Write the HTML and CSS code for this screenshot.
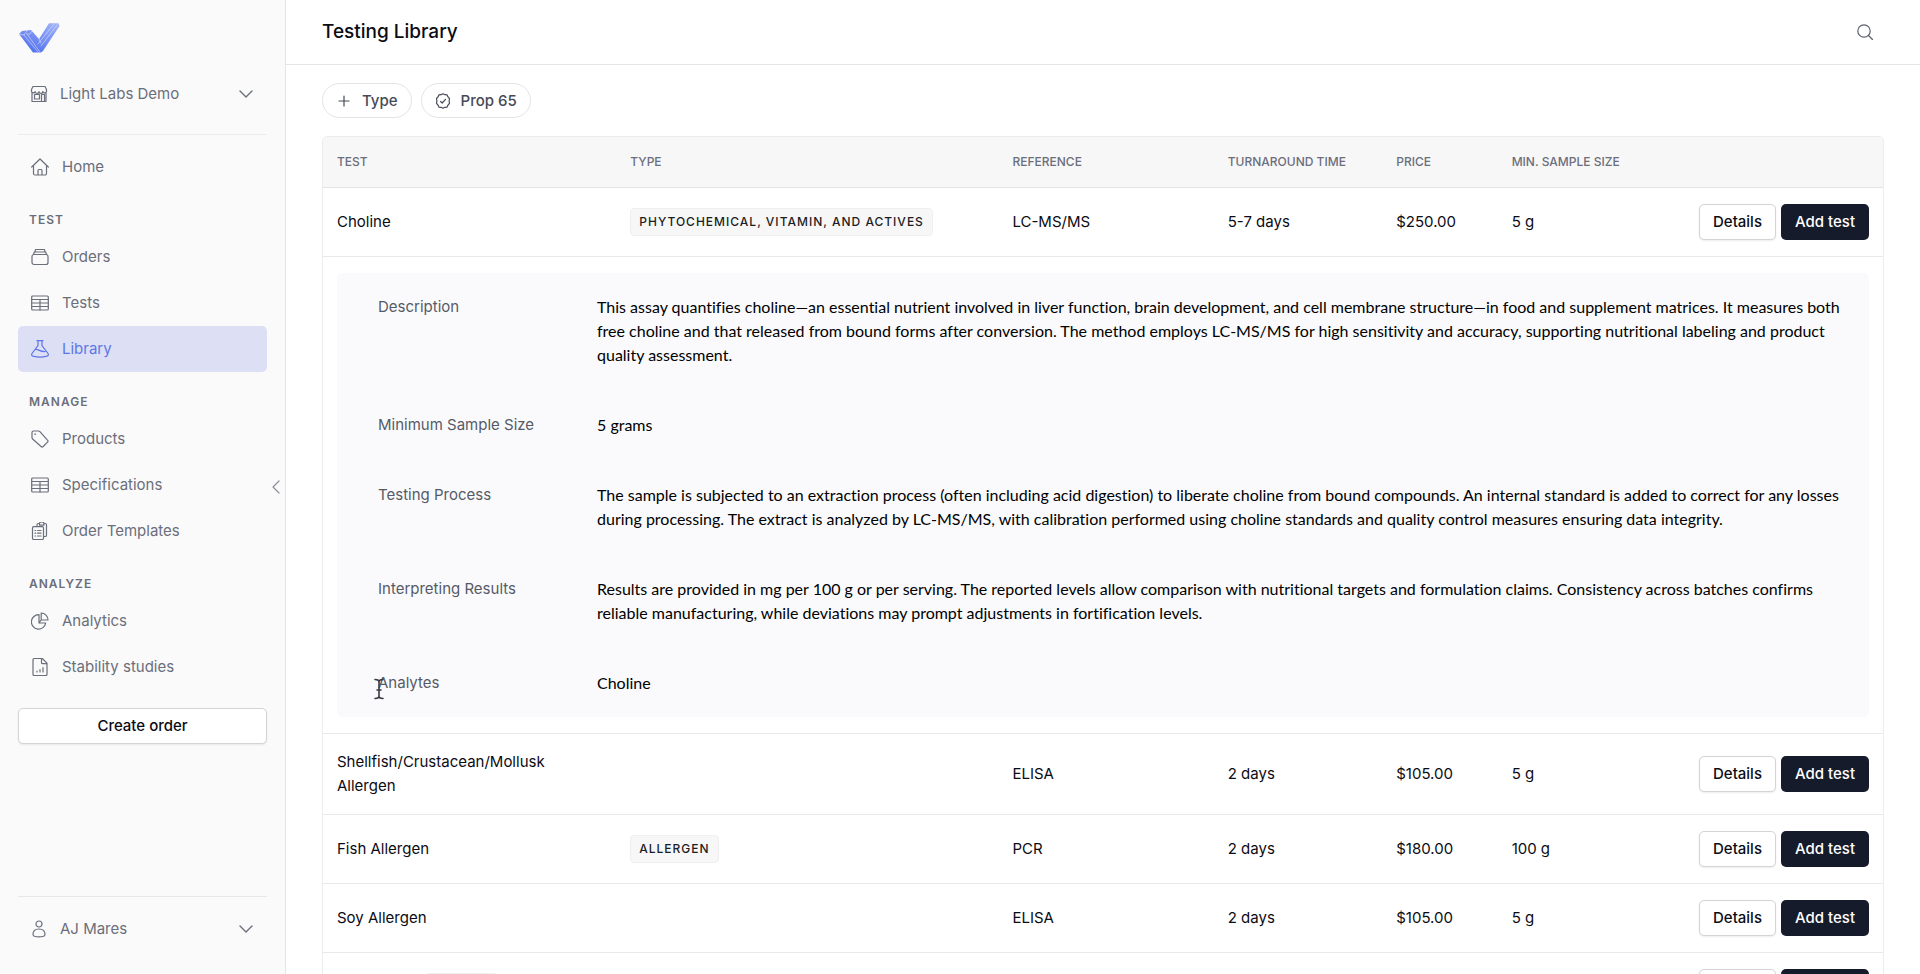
FILE: index.html
```
<!DOCTYPE html>
<html lang="en">
	<head>
		<meta charset="utf-8">
		<title>Testing Library</title>
		<link rel="stylesheet" href="styles.css">
	</head>
	<body>
		<aside class="sidebar">
			<a class="logo" href="#" aria-label="Light Labs">
				<svg width="42" height="32" viewBox="0 0 42 32">
					<defs>
						<linearGradient id="logoFill" x1="1" y1="0" x2="0.4" y2="1">
							<stop offset="0" stop-color="#a3b6f7"/>
							<stop offset="1" stop-color="#5673ee"/>
						</linearGradient>
					</defs>
					<path d="M1 12 4 9l9-1 8 9L31 1.300h9.500L41.500 4 25 29l-2 1.500h-8z" fill="url(#logoFill)"/>
					<path d="M1 12l5 1 3-4M6 13l14 17M9 12l13 18M9 12h3l2-3M36 2 20 22M39 3 23 24M21 17l2 4" fill="none" stroke="#dfe6fd" stroke-width="0.6"/>
				</svg>
			</a>
			<button class="switcher">
				<svg class="icon" viewBox="0 0 18 18"><path d="M3 1.500h12l1.500 3v2a1.900 1.900 0 0 1-3.700 0 1.900 1.900 0 0 1-3.800 0 1.900 1.900 0 0 1-3.800 0 1.900 1.900 0 0 1-3.700 0v-2zM2 8v8.500h14V8M4.500 9.500h5V14h-5zM11.500 16.500v-7h3v7"/></svg>
				<span>Light Labs Demo</span>
				<svg class="chevron" viewBox="0 0 14 8"><path d="M1 1l6 6 6-6"/></svg>
			</button>
			<nav class="nav">
				<a class="nav-item" href="#">
					<svg class="icon" viewBox="0 0 18 18"><path d="M.7 9 9 1l8.300 8M2.500 7.500v8a1.500 1.500 0 0 0 1.500 1.500h10a1.500 1.500 0 0 0 1.500-1.500v-8M7 17v-4.500a1 1 0 0 1 1-1h2a1 1 0 0 1 1 1V17"/></svg>
					Home
				</a>
				<h2 class="nav-title">Test</h2>
				<a class="nav-item" href="#">
					<svg class="icon" viewBox="0 0 18 18"><rect x="1" y="6.500" width="16" height="10" rx="2"/><path d="M2.500 6.500 3.300 4h11.400l.8 2.500M4 4l.6-2.500h8.800L14 4"/></svg>
					Orders
				</a>
				<a class="nav-item" href="#">
					<svg class="icon" viewBox="0 0 18 18"><rect x=".7" y="2" width="16.600" height="14" rx="1"/><path d="M.7 5.500h16.600M.7 9h16.600M.7 12.500h16.600M9 5.500V16"/></svg>
					Tests
				</a>
				<a class="nav-item active" href="#">
					<svg class="icon" viewBox="0 0 18 18"><path d="M6 .7h6M7 .7v5L1 13.500c-.8 1.300-.2 2.200 1 2.600 4 1.200 10 1.200 14 0 1.200-.4 1.800-1.300 1-2.600L11 5.700v-5M4.500 9.500c3-.5 5 2.500 9.500 2"/></svg>
					Library
				</a>
				<h2 class="nav-title">Manage</h2>
				<a class="nav-item" href="#">
					<svg class="icon" viewBox="0 0 18 18"><path d="M1 2.500A1.500 1.500 0 0 1 2.500 1h5a2 2 0 0 1 1.400.6l7.600 8.500a1.500 1.500 0 0 1 0 2.100l-4.300 4.300a1.500 1.500 0 0 1-2.100 0L1.600 9A2 2 0 0 1 1 7.500z"/><path d="M3.800 4.200h.8"/></svg>
					Products
				</a>
				<a class="nav-item" href="#">
					<svg class="icon" viewBox="0 0 18 18"><rect x=".7" y="2" width="16.600" height="14" rx="1"/><path d="M.7 5.500h16.600M.7 9h16.600M.7 12.500h16.600M9 5.500V16"/></svg>
					Specifications
				</a>
				<a class="nav-item" href="#">
					<svg class="icon" viewBox="0 0 18 18"><path d="M6 4.500V2.800a1.300 1.300 0 0 1 1.300-1.300h1.200a2.200 1.500 0 0 1 4.400 0h1.300a1.300 1.300 0 0 1 1.300 1.300v10.400a1.300 1.300 0 0 1-1.300 1.300H12.500M8.500 1.500v1.700h4.400V1.500"/><rect x="1.500" y="4.700" width="11" height="12.800" rx="1.300"/><path d="M4 8.500h.6M6.500 8.500h3.500M4 11.200h.6M6.500 11.200h3.500M4 14h.6M6.500 14h3.500"/></svg>
					Order Templates
				</a>
				<h2 class="nav-title">Analyze</h2>
				<a class="nav-item" href="#">
					<svg class="icon" viewBox="0 0 18 18"><path d="M8 2.700a7.200 7.200 0 1 0 6.700 8.300H8zM10.200 1v7H17a7 7 0 0 0-6.800-7zM8 11l2.200-3"/></svg>
					Analytics
				</a>
				<a class="nav-item" href="#">
					<svg class="icon" viewBox="0 0 18 18"><path d="M2 1.800A1.300 1.300 0 0 1 3.300.5h8L16 5.200v11a1.300 1.300 0 0 1-1.300 1.300H3.300A1.300 1.300 0 0 1 2 16.200zM10.500.7v4a1 1 0 0 0 1 1H16M6 14v-1M9 14v-2.500M12 14V9.500"/></svg>
					Stability studies
				</a>
			</nav>
			<button class="btn btn-light create">Create order</button>
			<div class="account">
				<button class="switcher">
					<svg class="icon" viewBox="0 0 18 18"><circle cx="9" cy="4" r="3"/><path d="M3 14.500c0-3.500 2-5.500 6-5.500s6 2 6 5.500c0 1.200-1 1.800-2.200 2-2.500.5-5.100.5-7.600 0-1.200-.2-2.200-.8-2.200-2z"/></svg>
					<span>AJ Mares</span>
					<svg class="chevron" viewBox="0 0 14 8"><path d="M1 1l6 6 6-6"/></svg>
				</button>
			</div>
			<button class="collapse" aria-label="Collapse sidebar">
				<svg width="8" height="14" viewBox="0 0 8 14"><path d="M7 1 1 7l6 6"/></svg>
			</button>
		</aside>
		<main class="main">
			<header class="topbar">
				<h1>Testing Library</h1>
				<button class="search" aria-label="Search">
					<svg width="16" height="16" viewBox="0 0 16 16"><circle cx="7" cy="7" r="6.200"/><path d="M11.500 11.500l4 4"/></svg>
				</button>
			</header>
			<div class="content">
				<div class="filters">
					<button class="chip">
						<svg class="icon-sm" viewBox="0 0 16 16"><path d="M8 3v10M3 8h10"/></svg>
						Type
					</button>
					<button class="chip">
						<svg class="icon-sm" viewBox="0 0 16 16"><path d="M8 .8l2 .9 2.100.2.900 2 1.500 1.600-.4 2.500.4 2.400-1.500 1.700-.9 2-2.100.2-2 .9-2-.9-2.100-.2-.9-2-1.500-1.700.4-2.400-.4-2.500L3 3.900l.9-2L6 1.700zM5.500 8.300l1.700 1.700 3.300-3.700"/></svg>
						Prop 65
					</button>
				</div>
				<div class="table-wrap">
					<table class="tests">
						<colgroup>
							<col class="col-test"><col class="col-type"><col class="col-ref"><col class="col-time"><col class="col-price"><col class="col-size"><col>
						</colgroup>
						<thead>
							<tr>
								<th>Test</th>
								<th>Type</th>
								<th>Reference</th>
								<th>Turnaround time</th>
								<th>Price</th>
								<th>Min. sample size</th>
								<th></th>
							</tr>
						</thead>
						<tbody>
							<tr>
								<td>Choline</td>
								<td><span class="badge">Phytochemical, vitamin, and actives</span></td>
								<td>LC-MS/MS</td>
								<td>5-7 days</td>
								<td>$250.00</td>
								<td>5 g</td>
								<td><div class="actions"><button class="btn btn-light">Details</button><button class="btn btn-dark">Add test</button></div></td>
							</tr>
							<tr>
								<td colspan="7">
									<dl class="details">
										<dt>Description</dt>
										<dd>This assay quantifies choline—an essential nutrient involved in liver function, brain development, and cell membrane structure—in food and supplement matrices. It measures both free choline and that released from bound forms after conversion. The method employs LC-MS/MS for high sensitivity and accuracy, supporting nutritional labeling and product quality assessment.</dd>
										<dt>Minimum Sample Size</dt>
										<dd>5 grams</dd>
										<dt>Testing Process</dt>
										<dd>The sample is subjected to an extraction process (often including acid digestion) to liberate choline from bound compounds. An internal standard is added to correct for any losses during processing. The extract is analyzed by LC-MS/MS, with calibration performed using choline standards and quality control measures ensuring data integrity.</dd>
										<dt>Interpreting Results</dt>
										<dd>Results are provided in mg per 100 g or per serving. The reported levels allow comparison with nutritional targets and formulation claims. Consistency across batches confirms reliable manufacturing, while deviations may prompt adjustments in fortification levels.</dd>
										<dt class="hovered">Analytes
											<svg class="cursor" width="10" height="22" viewBox="0 0 10 22"><path d="M1 1.500c2 0 4 .5 4 2.500 0-2 2-2.500 4-2.500M5 4v14M1 20.500c2 0 4-.5 4-2.500 0 2 2 2.500 4 2.500M3 12h4"/></svg>
										</dt>
										<dd>Choline</dd>
									</dl>
								</td>
							</tr>
							<tr>
								<td>Shellfish/Crustacean/Mollusk Allergen</td>
								<td></td>
								<td>ELISA</td>
								<td>2 days</td>
								<td>$105.00</td>
								<td>5 g</td>
								<td><div class="actions"><button class="btn btn-light">Details</button><button class="btn btn-dark">Add test</button></div></td>
							</tr>
							<tr>
								<td>Fish Allergen</td>
								<td><span class="badge">Allergen</span></td>
								<td>PCR</td>
								<td>2 days</td>
								<td>$180.00</td>
								<td>100 g</td>
								<td><div class="actions"><button class="btn btn-light">Details</button><button class="btn btn-dark">Add test</button></div></td>
							</tr>
							<tr>
								<td>Soy Allergen</td>
								<td></td>
								<td>ELISA</td>
								<td>2 days</td>
								<td>$105.00</td>
								<td>5 g</td>
								<td><div class="actions"><button class="btn btn-light">Details</button><button class="btn btn-dark">Add test</button></div></td>
							</tr>
							<tr>
								<td><span class="badge badge-inline"></span></td>
								<td></td>
								<td></td>
								<td></td>
								<td></td>
								<td></td>
								<td><div class="actions"><button class="btn btn-light">Details</button><button class="btn btn-dark">Add test</button></div></td>
							</tr>
						</tbody>
					</table>
				</div>
			</div>
		</main>
	</body>
</html>
```
FILE: styles.css
```
*
{
	box-sizing: border-box;
}
body
{
	margin: 0;
	display: flex;
	height: 100vh;
	overflow: hidden;
	background-color: #fff;
	font-family: Inter, "Liberation Sans", sans-serif;
	font-size: 15px;
	line-height: 24px;
	color: #0b0c14;
}
button
{
	font: inherit;
	color: inherit;
	background: none;
	border: none;
	padding: 0;
	cursor: pointer;
}
svg
{
	flex: none;
	fill: none;
	stroke: currentColor;
	stroke-width: 1.2;
	stroke-linecap: round;
	stroke-linejoin: round;
}
.sidebar
{
	position: relative;
	flex: none;
	display: flex;
	flex-direction: column;
	width: 286px;
	padding: 22px 18px 0;
	background-color: #fafafa;
	border-right: 1px solid #e5e5e8;
	color: #6b6e7b;
}
.logo
{
	height: 32px;
}
.logo svg
{
	display: block;
	stroke: none;
}
.switcher
{
	display: flex;
	align-items: center;
	gap: 12px;
	width: 100%;
	padding: 0 14px 0 12px;
	text-align: left;
}
.switcher span
{
	flex: 1;
}
.sidebar > .switcher
{
	height: 81px;
	border-bottom: 1px solid #ececef;
}
.icon
{
	width: 18px;
	height: 18px;
}
.chevron
{
	width: 14px;
	height: 8px;
	stroke-width: 1.4;
}
.nav
{
	padding-top: 9px;
}
.nav-item
{
	display: flex;
	align-items: center;
	gap: 13px;
	height: 46px;
	padding-left: 13px;
	border-radius: 5px;
	color: inherit;
	text-decoration: none;
}
.nav-item.active
{
	background-color: #dddff4;
	color: #5c78e6;
}
.nav-title
{
	margin: 0;
	padding: 20px 11px 4px;
	font-size: 12px;
	line-height: 20px;
	font-weight: 600;
	letter-spacing: 1px;
	text-transform: uppercase;
}
.btn
{
	height: 36px;
	padding: 0 13px;
	border: 1px solid transparent;
	border-radius: 5px;
	font-weight: 500;
	white-space: nowrap;
}
.btn-light
{
	background-color: #fff;
	border-color: #d3d3d8;
	box-shadow: 0 1px 2px rgba(0, 0, 0, 0.08);
	color: #0b0c14;
}
.btn-dark
{
	background-color: #151b2a;
	color: #fff;
}
.create
{
	flex: none;
	margin-top: 18px;
}
.account
{
	display: flex;
	height: 78px;
	margin-top: auto;
	padding-bottom: 14px;
	border-top: 1px solid #e8e8ec;
}
.collapse
{
	position: absolute;
	right: 5px;
	top: calc(50% - 7px);
	width: 8px;
	height: 14px;
	line-height: 0;
	color: #8c8e98;
}
.main
{
	flex: 1;
	min-width: 0;
}
.topbar
{
	display: flex;
	align-items: center;
	justify-content: space-between;
	height: 65px;
	padding: 0 47px 0 36px;
	border-bottom: 1px solid #e5e5e8;
}
.topbar h1
{
	margin: 0;
	font-size: 19px;
	line-height: 28px;
	font-weight: 500;
}
.search
{
	line-height: 0;
	color: #5f626e;
}
.content
{
	padding: 18px 36px 0;
}
.filters
{
	display: flex;
	gap: 9px;
	margin-bottom: 18px;
}
.chip
{
	display: flex;
	align-items: center;
	gap: 10px;
	height: 35px;
	padding: 0 13px;
	border: 1px solid #e4e4e8;
	border-radius: 18px;
	font-weight: 500;
	color: #464a57;
}
.icon-sm
{
	width: 16px;
	height: 16px;
}
.table-wrap
{
	border: 1px solid #ececef;
	border-radius: 5px 5px 0 0;
	overflow: hidden;
}
.tests
{
	width: 100%;
	table-layout: fixed;
	border-collapse: separate;
	border-spacing: 0;
}
.col-test
{
	width: 18.8%;
}
.col-type
{
	width: 24.5%;
}
.col-ref
{
	width: 13.8%;
}
.col-time
{
	width: 10.8%;
}
.col-price
{
	width: 7.4%;
}
.col-size
{
	width: 11%;
}
.tests th
{
	height: 51px;
	padding: 0 14px;
	background-color: #f7f7f8;
	border-bottom: 1px solid #e5e5e8;
	font-size: 12px;
	line-height: 20px;
	font-weight: 500;
	text-align: left;
	text-transform: uppercase;
	white-space: nowrap;
	color: #6b6e7b;
}
.tests td
{
	padding: 16px 14px;
	border-bottom: 1px solid #e9e9ec;
}
.badge
{
	display: block;
	width: fit-content;
	height: 28px;
	padding: 0 8px;
	border: 1px solid #efeff1;
	border-radius: 4px;
	background-color: #f7f7f8;
	font-size: 12px;
	line-height: 26px;
	font-weight: 500;
	letter-spacing: 1px;
	text-transform: uppercase;
	white-space: nowrap;
	color: #1c1d24;
}
.badge-inline
{
	width: 73px;
	margin-left: 88px;
}
.actions
{
	display: flex;
	justify-content: flex-end;
	gap: 5px;
}
.details
{
	display: grid;
	grid-template-columns: 179px 1fr;
	column-gap: 40px;
	row-gap: 46px;
	margin: 0;
	padding: 22px 14px 22px 41px;
	border-radius: 5px;
	background-color: #fafafc;
}
.details dt
{
	color: #565a67;
}
.details dd
{
	margin: 0;
	font-family: Lato, "Liberation Sans", sans-serif;
	font-size: 16px;
	font-variant-ligatures: none;
	color: #000;
}
.hovered
{
	position: relative;
}
.cursor
{
	position: absolute;
	left: -4px;
	top: 7px;
	color: #3a3b42;
	stroke-width: 1.6;
}
```
